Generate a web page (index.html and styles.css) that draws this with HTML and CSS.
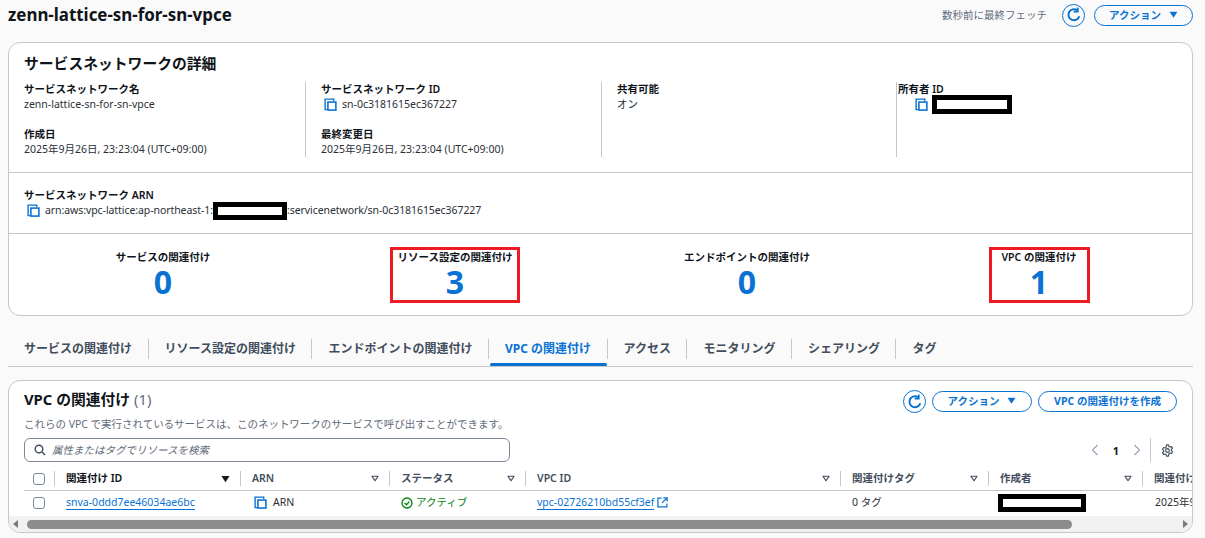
FILE: index.html
```html
<!DOCTYPE html>
<html lang="ja">
<head>
<meta charset="utf-8">
<title>zenn-lattice-sn-for-sn-vpce</title>
<link rel="stylesheet" href="styles.css">
</head>
<body>
<svg class="defs" width="0" height="0" aria-hidden="true">
  <symbol id="copy" viewBox="0 0 14 14"><path d="M3.5 12.5H1.2V1.2h9.3v2" fill="none" stroke="currentColor" stroke-width="1.5"/><rect x="4.2" y="4.4" width="8.6" height="8.6" fill="none" stroke="currentColor" stroke-width="1.7"/></symbol>
  <symbol id="refresh" viewBox="0 0 14 14"><path d="M11.6 8A4.8 4.8 0 1 1 9.8 2.9" fill="none" stroke="currentColor" stroke-width="1.7"/><path d="M10.3 .4v3.6H6.7" fill="none" stroke="currentColor" stroke-width="1.5"/></symbol>
  <symbol id="sort" viewBox="0 0 10 8"><path d="M1.2 1.2h7.6L5 6.8z" fill="none" stroke="currentColor" stroke-width="1.5" stroke-linejoin="round"/></symbol>
  <symbol id="sortfill" viewBox="0 0 10 8"><path d="M.5.8h9L5 7.6z" fill="currentColor"/></symbol>
</svg>
<header class="page-head">
  <h1 class="page-title">zenn-lattice-sn-for-sn-vpce</h1>
  <div class="head-actions">
    <span class="fetched">数秒前に最終フェッチ</span>
    <button class="icon-btn"><svg class="ico-refresh"><use href="#refresh"/></svg></button>
    <button class="btn btn-head">アクション<svg class="caret"><use href="#sortfill"/></svg></button>
  </div>
</header>

<section class="card detail">
  <h2 class="card-title">サービスネットワークの詳細</h2>
  <div class="fields">
    <div class="col">
      <div class="field"><div class="label">サービスネットワーク名</div><div class="value">zenn-lattice-sn-for-sn-vpce</div></div>
      <div class="field"><div class="label">作成日</div><div class="value">2025年9月26日, 23:23:04 (UTC+09:00)</div></div>
    </div>
    <div class="col">
      <div class="field"><div class="label">サービスネットワーク ID</div><div class="value"><svg class="copy"><use href="#copy"/></svg>sn-0c3181615ec367227</div></div>
      <div class="field"><div class="label">最終変更日</div><div class="value">2025年9月26日, 23:23:04 (UTC+09:00)</div></div>
    </div>
    <div class="col">
      <div class="field"><div class="label">共有可能</div><div class="value">オン</div></div>
    </div>
    <div class="col">
      <div class="field"><div class="label owner-label">所有者 ID</div><div class="value"><svg class="copy"><use href="#copy"/></svg><span class="redact redact-owner"></span></div></div>
    </div>
  </div>
  <div class="arn">
    <div class="label">サービスネットワーク ARN</div>
    <div class="value arn-value"><svg class="copy copy-arn"><use href="#copy"/></svg>arn:aws:vpc-lattice:ap-northeast-1:<span class="redact redact-arn"></span>:servicenetwork/sn-0c3181615ec367227</div>
  </div>
  <div class="metrics">
    <div class="metric"><div class="metric-box"><div class="label">サービスの関連付け</div><div class="num">0</div></div></div>
    <div class="metric"><div class="metric-box marked marked-a"><div class="label">リソース設定の関連付け</div><div class="num">3</div></div></div>
    <div class="metric"><div class="metric-box"><div class="label">エンドポイントの関連付け</div><div class="num">0</div></div></div>
    <div class="metric"><div class="metric-box marked marked-b"><div class="label">VPC の関連付け</div><div class="num">1</div></div></div>
  </div>
</section>

<nav class="tabs">
  <a class="tab">サービスの関連付け</a>
  <a class="tab">リソース設定の関連付け</a>
  <a class="tab">エンドポイントの関連付け</a>
  <a class="tab active">VPC の関連付け</a>
  <a class="tab">アクセス</a>
  <a class="tab">モニタリング</a>
  <a class="tab">シェアリング</a>
  <a class="tab last">タグ</a>
</nav>

<section class="card assoc">
  <div class="assoc-head">
    <div>
      <h2 class="assoc-title">VPC の関連付け <span class="count">(1)</span></h2>
      <p class="assoc-desc">これらの VPC で実行されているサービスは、このネットワークのサービスで呼び出すことができます。</p>
    </div>
    <div class="assoc-actions">
      <button class="icon-btn"><svg class="ico-refresh"><use href="#refresh"/></svg></button>
      <button class="btn btn-action">アクション<svg class="caret"><use href="#sortfill"/></svg></button>
      <button class="btn btn-create">VPC の関連付けを作成</button>
    </div>
  </div>
  <div class="tools">
    <div class="search">
      <svg class="search-ico" viewBox="0 0 12 12"><circle cx="5" cy="5" r="3.8" fill="none" stroke="currentColor" stroke-width="1.4"/><path d="M8 8l3 3" stroke="currentColor" stroke-width="1.5"/></svg>
      <span>属性またはタグでリソースを検索</span>
    </div>
    <div class="pager">
      <svg class="chev" viewBox="0 0 8 12"><path d="M6.5 1L1.5 6l5 5" fill="none" stroke="currentColor" stroke-width="1.2"/></svg>
      <b class="page-no">1</b>
      <svg class="chev" viewBox="0 0 8 12"><path d="M1.5 1l5 5-5 5" fill="none" stroke="currentColor" stroke-width="1.2"/></svg>
      <span class="pager-sep"></span>
      <svg class="gear" viewBox="0 0 14 14"><path d="M5.9 1h2.2l.4 1.7 1.1.6 1.7-.5 1.1 1.9-1.3 1.2v1.2l1.3 1.2-1.1 1.9-1.7-.5-1.1.6L8.1 13H5.9l-.4-1.7-1.1-.6-1.7.5-1.1-1.9 1.3-1.2V6.9L1.6 5.7l1.1-1.9 1.7.5 1.1-.6z" fill="none" stroke="currentColor" stroke-width="1.2" stroke-linejoin="round"/><circle cx="7" cy="7" r="2" fill="none" stroke="currentColor" stroke-width="1.2"/></svg>
    </div>
  </div>
  <div class="table">
    <div class="tr th">
      <div class="c c-check"><span class="check"></span></div>
      <div class="c c-sep strong">関連付け ID<svg class="sort sort-on"><use href="#sortfill"/></svg></div>
      <div class="c c-sep">ARN<svg class="sort"><use href="#sort"/></svg></div>
      <div class="c c-sep">ステータス<svg class="sort"><use href="#sort"/></svg></div>
      <div class="c c-sep">VPC ID<svg class="sort"><use href="#sort"/></svg></div>
      <div class="c c-sep">関連付けタグ<svg class="sort"><use href="#sort"/></svg></div>
      <div class="c c-sep">作成者<svg class="sort"><use href="#sort"/></svg></div>
      <div class="c c-sep">関連付け日時</div>
    </div>
    <div class="tr td">
      <div class="c c-check"><span class="check"></span></div>
      <div class="c"><a class="link">snva-0ddd7ee46034ae6bc</a></div>
      <div class="c c-arn"><svg class="copy"><use href="#copy"/></svg>ARN</div>
      <div class="c status"><svg class="ok" viewBox="0 0 12 12"><circle cx="6" cy="6" r="5" fill="none" stroke="currentColor" stroke-width="1.3"/><path d="M3.6 6l1.8 1.8 3-3.2" fill="none" stroke="currentColor" stroke-width="1.3"/></svg>アクティブ</div>
      <div class="c"><a class="link">vpc-02726210bd55cf3ef</a><svg class="ext" viewBox="0 0 12 12"><path d="M5 1.2H1v9.6h9.8V7" fill="none" stroke="currentColor" stroke-width="1.4"/><path d="M7 1h4v4M11 1L5.6 6.4" fill="none" stroke="currentColor" stroke-width="1.4"/></svg></div>
      <div class="c">0 タグ</div>
      <div class="c c-user"><span class="redact redact-user"></span></div>
      <div class="c c-date">2025年9月26日, 23:23:04 (UTC+09:00)</div>
    </div>
  </div>
  <div class="scrollbar">
    <span class="arrow arrow-l"></span>
    <span class="thumb"></span>
    <span class="arrow arrow-r"></span>
  </div>
</section>
</body>
</html>
```

FILE: styles.css
```css
* { box-sizing: border-box; }
html, body { margin: 0; padding: 0; }
body {
  height: 538px;
  overflow: hidden;
  padding: 0 12px 0 8px;
  background: #fafafa;
  color: #16191f;
  font-family: "Noto Sans", "Noto Sans CJK JP", sans-serif;
  font-size: 10.5px;
  line-height: 15px;
}
.defs { position: absolute; }
button { font-family: inherit; background: #fff; cursor: pointer; }

.page-head { display: flex; justify-content: space-between; align-items: center; height: 30px; margin-bottom: 12px; }
.page-title { margin: 0; font-size: 16.9px; font-weight: 700; line-height: 30px; color: #0f141a; }
.head-actions { display: flex; align-items: center; }
.fetched { color: #5f6b7a; margin-right: 15px; }
.icon-btn { width: 23px; height: 23px; padding: 0; border: 1.5px solid #0972d3; border-radius: 50%; color: #0972d3; display: flex; align-items: center; justify-content: center; background: #fafafa; }
.ico-refresh { width: 16px; height: 16px; }
.btn { height: 21px; padding: 0 0 2px; border: 1.5px solid #0972d3; border-radius: 11px; color: #0972d3; font-size: 10.5px; font-weight: 700; display: flex; align-items: center; justify-content: center; }
.btn-head { width: 99px; margin-left: 9px; background: #fafafa; }
.caret { width: 9px; height: 7px; margin-left: 8px; }

.card { background: #fff; border: 1px solid #c6c6cd; border-radius: 12px; }
.detail { height: 274px; overflow: hidden; }
.card-title { margin: 0; padding: 10px 15px 0; height: 31px; font-size: 14.8px; font-weight: 700; line-height: 20px; color: #0f141a; }
.fields { display: grid; grid-template-columns: 296px 296px 295px 295px; height: 99px; padding: 8px 0 0 0; border-bottom: 1px solid #c6c6cd; }
.col { padding: 0 0 0 15px; height: 75px; border-left: 1px solid #c6c6cd; display: flex; flex-direction: column; gap: 15px; }
.col:first-child { border-left: 0; }
.label { font-weight: 600; color: #0f141a; line-height: 15px; }
.owner-label { margin-left: -14px; }
.value { line-height: 15px; height: 15px; color: #2a2f37; display: flex; align-items: center; white-space: nowrap; }
.copy { width: 13px; height: 13px; color: #0972d3; margin: 0 5px 0 3px; flex: none; }
.copy-arn { margin: 0 5px 0 3px; }
.arn { height: 61px; padding: 15px 15px 0; border-bottom: 1px solid #c6c6cd; }
.arn-value { letter-spacing: -0.07px; }
.redact { display: inline-block; background: #fff; border: 5px solid #000; flex: none; }
.redact-owner { width: 80px; height: 19px; margin: -2px 0 -2px -1px; }
.redact-arn { width: 74px; height: 18px; margin: -2px 0; }
.redact-user { width: 88px; height: 18px; margin-left: -2px; }

.metrics { display: grid; grid-template-columns: repeat(4, 292px); padding: 13px 0 0 8px; }
.metric { display: flex; justify-content: center; }
.metric-box { height: 56px; padding-top: 0; display: flex; flex-direction: column; align-items: center; border: 3px solid transparent; }
.metric-box .label { white-space: nowrap; }
.marked { border-color: #ed1c24; }
.marked-a { width: 130px; }
.marked-b { width: 101px; }
.num { font-size: 32px; line-height: 36px; font-weight: 700; color: #0972d3; margin-top: -1px; }

.tabs { display: flex; height: 45px; padding: 17px 0 0 0; border-bottom: 1px solid #c6c6cd; margin-top: 6px; margin-bottom: 13px; width: 1185px; }
.tab { position: relative; padding: 0 15.5px 0 16px; height: 20px; line-height: 20px; font-size: 12px; font-weight: 600; color: #414d5c; border-right: 1px solid #c6c6cd; white-space: nowrap; }
.tab.last { border-right: 0; }
.tab.active { color: #0972d3; font-weight: 700; }
.tab.active::after { content: ""; position: absolute; left: 1px; right: 0; top: 24px; height: 3px; background: #0972d3; border-radius: 2px; }

.assoc { height: 153px; overflow: hidden; position: relative; }
.assoc-head { display: flex; justify-content: space-between; padding: 7px 15px 0; height: 48px; }
.assoc-title { margin: 0; font-size: 14.8px; line-height: 22px; font-weight: 700; color: #0f141a; }
.count { font-weight: 400; color: #5f6b7a; }
.assoc-desc { margin: 7px 0 0; font-size: 10.5px; color: #5f6b7a; line-height: 15px; letter-spacing: -0.02px; }
.assoc-actions { display: flex; align-items: flex-start; padding-top: 2px; }
.assoc-actions .icon-btn { background: #fff; margin-right: 6px; }
.assoc-actions .btn { margin-top: 1px; }
.btn-action { width: 100px; }
.btn-create { width: 139px; margin-left: 6px; }

.tools { display: flex; justify-content: space-between; padding: 9px 15px 0; height: 33px; }
.search { width: 486px; height: 24px; border: 1px solid #7d8998; border-radius: 6px; background: #fff; display: flex; align-items: center; padding-left: 9px; color: #5f6b7a; font-style: italic; }
.search-ico { width: 12px; height: 12px; margin-right: 6px; color: #414d5c; }
.pager { display: flex; align-items: center; height: 24px; padding-right: 3px; }
.chev { width: 8px; height: 12px; color: #9ba7b6; }
.page-no { font-size: 11px; margin: 0 14px; }
.pager-sep { width: 1px; height: 24px; background: #c6c6cd; margin: 0 10px 0 9px; }
.gear { width: 13px; height: 13px; color: #414d5c; }

.table { width: 1183px; overflow: hidden; }
.tr { display: grid; grid-template-columns: 45px 186px 149px 136px 315px 148px 154px 200px; white-space: nowrap; }
.th { height: 24px; margin-top: 5px; font-weight: 600; color: #414d5c; align-items: center; position: relative; }
.th::after { content: ""; position: absolute; left: 15px; right: 0; bottom: 0; height: 1px; background: #c6c6cd; }
.th .c { height: 15px; line-height: 15px; padding-left: 11px; position: relative; margin-bottom: 1px; }
.c-sep { border-left: 1px solid #c6c6cd; }
.strong { color: #0f141a; }
.sort { position: absolute; right: 10px; top: 4px; width: 8px; height: 7px; color: #414d5c; }
.sort-on { color: #16191f; width: 9px; height: 8px; }
.th .c-check, .td .c-check { padding-left: 24px; display: flex; align-items: center; }
.check { display: block; width: 12px; height: 12px; border: 1px solid #7d8998; border-radius: 3px; background: #fff; flex: none; }
.td { height: 23px; align-items: center; color: #2a2f37; background: #fff; }
.td .c { padding-left: 12px; display: flex; align-items: center; height: 23px; }
.td .c-check { padding-left: 24px; }
.td .c-date { padding-left: 13px; }
.link { color: #0972d3; border-bottom: 1px solid #0972d3; line-height: 13px; }
.c-arn .copy { margin: 0 6px 0 2px; }
.status { color: #037f0c; }
.ok { width: 12px; height: 12px; margin-right: 3px; }
.ext { width: 11px; height: 11px; color: #0972d3; margin-left: 3px; }

.scrollbar { display: flex; align-items: center; height: 16px; background: #f1f1f1; padding: 0 4px; position: absolute; left: 0; right: 0; bottom: 0; }
.thumb { width: 1045px; height: 9px; border-radius: 5px; background: #8c8c8c; margin-left: 9px; }
.arrow { width: 0; height: 0; border-style: solid; border-color: transparent; border-width: 4px; flex: none; }
.arrow-l { border-right: 5px solid #7a7a7a; border-left-width: 0; }
.arrow-r { border-left: 5px solid #7a7a7a; border-right-width: 0; margin-left: auto; }
```
